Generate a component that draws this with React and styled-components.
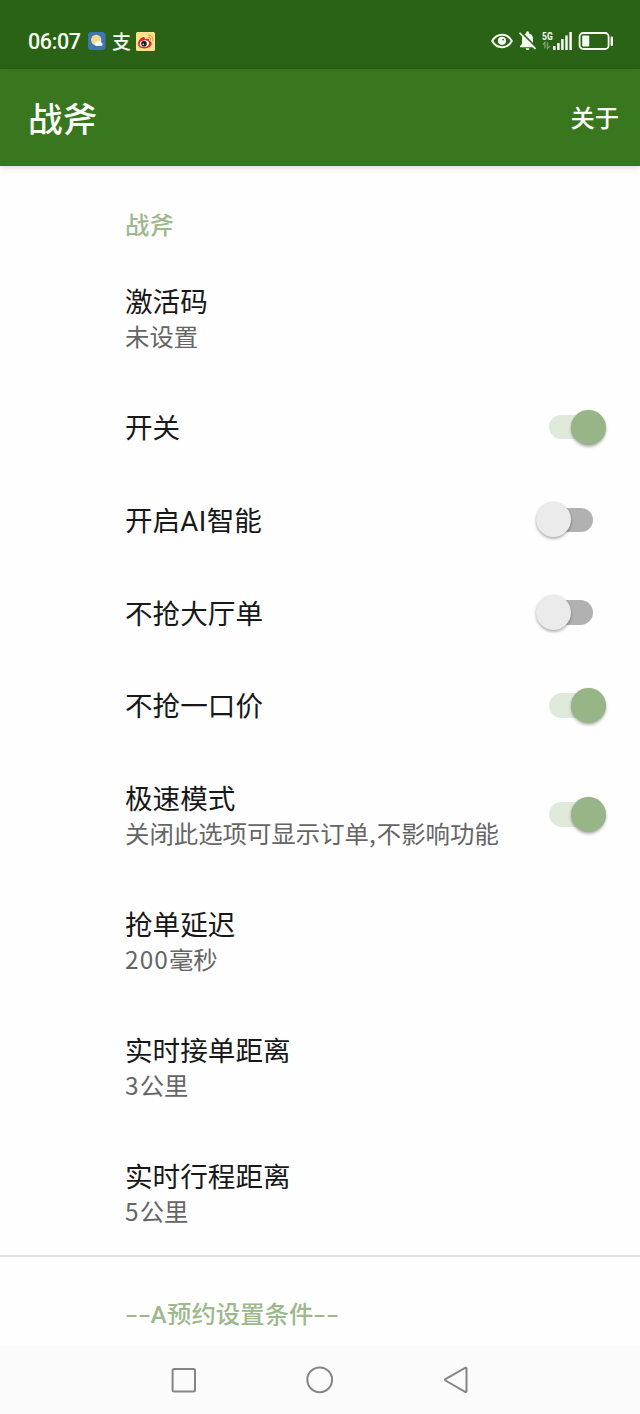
import styled, { createGlobalStyle } from "styled-components";

const GlobalStyle = createGlobalStyle`
  * {
    box-sizing: border-box;
  }
  body {
    margin: 0;
    background-color: #fefefe;
    font-family: "Noto Sans CJK SC", "Noto Sans", sans-serif;
  }
`;

const Screen = styled.div`
  display: flex;
  flex-direction: column;
  width: 640px;
  height: 1414px;
  overflow: hidden;
  background-color: #fefefe;
`;

const StatusBar = styled.div`
  display: flex;
  flex: none;
  align-items: center;
  justify-content: space-between;
  height: 69px;
  padding: 13px 26px 0 28px;
  background-color: #2a6315;
  color: #f6fbf2;
`;

const StatusGroup = styled.div`
  display: flex;
  align-items: center;
  height: 24px;
`;

const Time = styled.span`
  width: 60px;
  padding-top: 1px;
  font-family: Roboto, sans-serif;
  font-size: 21.5px;
  font-weight: 500;
  line-height: 24px;
  letter-spacing: -0.4px;
`;

const PayMark = styled.span`
  width: 20px;
  margin: 0 4px 0 6px;
  font-size: 19px;
  font-weight: 500;
  line-height: 22px;
`;

const Icon = styled.svg`
  display: block;
  flex: none;
  overflow: visible;
  margin-left: ${(props) => props.$gap || 0}px;
`;

const Network = styled.div`
  display: flex;
  flex-direction: column;
  width: 11px;
  height: 20px;
  margin-left: 5px;
`;

const NetworkType = styled.span`
  font-family: Roboto, sans-serif;
  font-size: 11.5px;
  font-weight: 700;
  line-height: 10px;
  white-space: nowrap;
  transform: scaleX(0.74);
  transform-origin: left;
`;

const AppBar = styled.header`
  display: flex;
  flex: none;
  align-items: center;
  justify-content: space-between;
  height: 97px;
  padding: 0 21px 2px 28px;
  background-color: #38771e;
  color: #fcfefa;
  box-shadow: 0 1px 7px rgba(0, 0, 0, 0.18);
  z-index: 1;
`;

const AppTitle = styled.h1`
  margin: 0;
  font-size: 34.5px;
  font-weight: 500;
  line-height: 48px;
`;

const AppAction = styled.span`
  font-size: 24.3px;
  font-weight: 500;
  line-height: 36px;
`;

const List = styled.main`
  flex: 1;
  min-height: 0;
  overflow: hidden;
`;

const Section = styled.section`
  border-top: ${(props) => (props.$divided ? "2px solid #e1e1e1" : "none")};
`;

const SectionTitle = styled.h2`
  display: flex;
  height: ${(props) => props.$height}px;
  margin: 0;
  padding: ${(props) => props.$top}px 0 0 125px;
  color: #9db88d;
  font-size: 24.4px;
  font-weight: 500;
  line-height: 36px;
`;

const Dashes = styled.span`
  width: 25.4px;
  transform: scaleX(1.5);
  transform-origin: left;
`;

const Letters = styled.span`
  font-family: Roboto, sans-serif;
  line-height: 1;
  letter-spacing: 0.5px;
`;

const Digits = styled.span`
  letter-spacing: 1.1px;
`;

const Row = styled.div`
  display: flex;
  align-items: center;
  justify-content: space-between;
  height: ${(props) => (props.$tall ? 126 : 92.7)}px;
  padding: 0 34px 0 125px;
`;

const Title = styled.div`
  color: #181818;
  font-size: 27.6px;
  line-height: 37px;
  white-space: nowrap;
`;

const Summary = styled.div`
  color: #656565;
  font-size: 24.4px;
  line-height: 33.4px;
  white-space: nowrap;
`;

const Switch = styled.div`
  display: flex;
  align-items: center;
  width: 44.5px;
  height: 24.5px;
  margin-top: 1px;
  margin-right: 13px;
  border-radius: 13px;
  background-color: ${(props) => (props.$on ? "#e0eadb" : "#b1b1b1")};
`;

const Thumb = styled.div`
  flex: none;
  width: 35px;
  height: 35px;
  margin-left: ${(props) => (props.$on ? 22.8 : -12.5)}px;
  border-radius: 50%;
  background-color: ${(props) => (props.$on ? "#98b588" : "#ebebeb")};
  box-shadow: 0 2px 3px rgba(0, 0, 0, 0.28), 0 0 2px rgba(0, 0, 0, 0.1);
`;

const NavBar = styled.nav`
  display: flex;
  flex: none;
  align-items: center;
  justify-content: space-between;
  height: 68px;
  padding: 0 171px 0 170px;
  background-color: #fbfbfb;
`;

const settings = [
  { title: "激活码", summary: "未设置" },
  { title: "开关", on: true },
  { title: "开启AI智能", on: false },
  { title: "不抢大厅单", on: false },
  { title: "不抢一口价", on: true },
  { title: "极速模式", summary: "关闭此选项可显示订单,不影响功能", on: true },
  { title: "抢单延迟", summary: "200毫秒" },
  { title: "实时接单距离", summary: "3公里" },
  { title: "实时行程距离", summary: "5公里" },
];

// letters are set in Roboto, digits and commas get a little more room
const mixed = (text) =>
  text.split(/([A-Za-z]+|[0-9,]+)/).map((part, i) => {
    if (i % 2 === 0) return part;
    return /[A-Za-z]/.test(part) ? <Letters key={i}>{part}</Letters> : <Digits key={i}>{part}</Digits>;
  });

const WeatherIcon = () => (
  <Icon width="18" height="18" viewBox="0 0 18 18">
    <rect width="17.5" height="18" rx="3.5" fill="#3c76b5" />
    <circle cx="8.2" cy="8" r="5.2" fill="#fbd68b" />
    <path d="M8.3 14a2.2 2.2 0 0 1 .1-4.3 2.9 2.9 0 0 1 4.9.8 1.8 1.8 0 0 1 0 3.5z" fill="#f5f8fb" />
  </Icon>
);

const WeiboIcon = () => (
  <Icon width="19" height="19" viewBox="0 0 19 19">
    <rect width="19" height="19" rx="1.5" fill="#fbe08e" />
    <path
      d="M2 11.7C2 8.6 6.2 4.3 8.2 5.2c.8.4.8 1.2.5 2.1 2.2-1 4.9-1 4.4 1.4 1.7.5 2.6 1.4 2.6 2.8 0 2.6-3.4 4.9-7.2 4.9S2 14.5 2 11.7z"
      fill="#d52b20"
    />
    <ellipse cx="8.3" cy="11.7" rx="4.7" ry="3.3" fill="#fff" transform="rotate(-8 8.3 11.7)" />
    <circle cx="8" cy="11.7" r="2.8" fill="#161616" />
    <circle cx="7.2" cy="12.3" r="0.8" fill="#fff" />
    <path d="M12.3 3.1a4.3 4.3 0 0 1 4.4 5.6M12.5 5.4a2 2 0 0 1 2 2.6" fill="none" stroke="#e9a23a" strokeWidth="1.2" strokeLinecap="round" />
  </Icon>
);

const EyeIcon = () => (
  <Icon width="22" height="16" viewBox="0 0 22 16">
    <path d="M1.2 8C5.8-.3 16.2-.3 20.8 8 16.2 16.3 5.8 16.3 1.2 8z" fill="none" stroke="#f6fbf2" strokeWidth="2" strokeLinejoin="round" />
    <circle cx="11" cy="7.8" r="4.1" fill="#f6fbf2" />
    <circle cx="12.2" cy="6.6" r="0.9" fill="#2a6315" />
  </Icon>
);

const BellOffIcon = () => (
  <Icon $gap={6} width="18" height="20" viewBox="0 0 18 20">
    <path d="M1 16.3v-1.2l2-2V8c0-3 1.4-4.8 4-5.4V1.8a1.5 1.5 0 0 1 3 0v.8c2.6.6 4 2.4 4 5.4v5.1l2 2v1.2zM6.6 17.2h3.8a1.9 1.9 0 0 1-3.8 0z" fill="#f6fbf2" />
    <path d="M1.6.6l16 16.2" stroke="#2a6315" strokeWidth="1.8" />
    <path d="M.5 1.7l16 16.2" stroke="#f6fbf2" strokeWidth="1.6" />
  </Icon>
);

const DataArrows = () => (
  <Icon width="9" height="8" viewBox="0 0 9 8">
    <path d="M3 7.5V1.3L.8 3.7M5.5 1.3v6.2l2.3-2.4" fill="none" stroke="#81a36e" strokeWidth="1.3" />
  </Icon>
);

const SignalIcon = () => (
  <Icon width="19" height="18" viewBox="0 0 19 18">
    <path d="M1.3 18v-4M5.4 18v-7M9.4 18V7M13.5 18V3.6M17.6 18V0" stroke="#f6fbf2" strokeWidth="2.5" />
  </Icon>
);

const BatteryIcon = () => (
  <Icon $gap={7} width="35" height="18" viewBox="0 0 35 18">
    <rect x="0.6" y="1" width="29" height="16" rx="3.5" fill="none" stroke="#f6fbf2" strokeWidth="1.8" />
    <rect x="3.2" y="3.6" width="7" height="10.8" rx="1" fill="#f6fbf2" />
    <rect x="31.6" y="4.5" width="2.4" height="9.5" rx="1" fill="#f6fbf2" />
  </Icon>
);

const Setting = ({ item }) => {
  return (
    <Row $tall={Boolean(item.summary)}>
      <div>
        <Title>{mixed(item.title)}</Title>
        {item.summary && <Summary>{mixed(item.summary)}</Summary>}
      </div>
      {item.on !== undefined && (
        <Switch $on={item.on}>
          <Thumb $on={item.on} />
        </Switch>
      )}
    </Row>
  );
};

const App = () => {
  return (
    <Screen>
      <GlobalStyle />
      <StatusBar>
        <StatusGroup>
          <Time>06:07</Time>
          <WeatherIcon />
          <PayMark>支</PayMark>
          <WeiboIcon />
        </StatusGroup>
        <StatusGroup>
          <EyeIcon />
          <BellOffIcon />
          <Network>
            <NetworkType>5G</NetworkType>
            <DataArrows />
          </Network>
          <SignalIcon />
          <BatteryIcon />
        </StatusGroup>
      </StatusBar>
      <AppBar>
        <AppTitle>战斧</AppTitle>
        <AppAction>关于</AppAction>
      </AppBar>
      <List>
        <Section>
          <SectionTitle $height={88.4} $top={40}>战斧</SectionTitle>
          {settings.map((item) => (
            <Setting key={item.title} item={item} />
          ))}
        </Section>
        <Section $divided>
          <SectionTitle $height={92} $top={38}>
            <Dashes>--</Dashes>
            <span>{mixed("A预约设置条件")}</span>
            <Dashes>--</Dashes>
          </SectionTitle>
        </Section>
      </List>
      <NavBar>
        <Icon width="27" height="27" viewBox="0 0 27 27" fill="none" stroke="#858585" strokeWidth="2">
          <rect x="2.6" y="2" width="22.4" height="22.6" rx="1.5" />
        </Icon>
        <Icon width="28" height="28" viewBox="0 0 28 28" fill="none" stroke="#858585" strokeWidth="2">
          <circle cx="13.7" cy="13.8" r="12.4" />
        </Icon>
        <Icon width="26" height="28" viewBox="0 0 26 28" fill="none" stroke="#858585" strokeWidth="2" strokeLinejoin="round">
          <path d="M2.4 13.1L22.2 1.8Q23.5 1.3 23.5 2.6V25Q23.5 26.3 22.2 25.8L2.4 14.5Q1.4 13.8 2.4 13.1z" />
        </Icon>
      </NavBar>
    </Screen>
  );
};

export default App;
